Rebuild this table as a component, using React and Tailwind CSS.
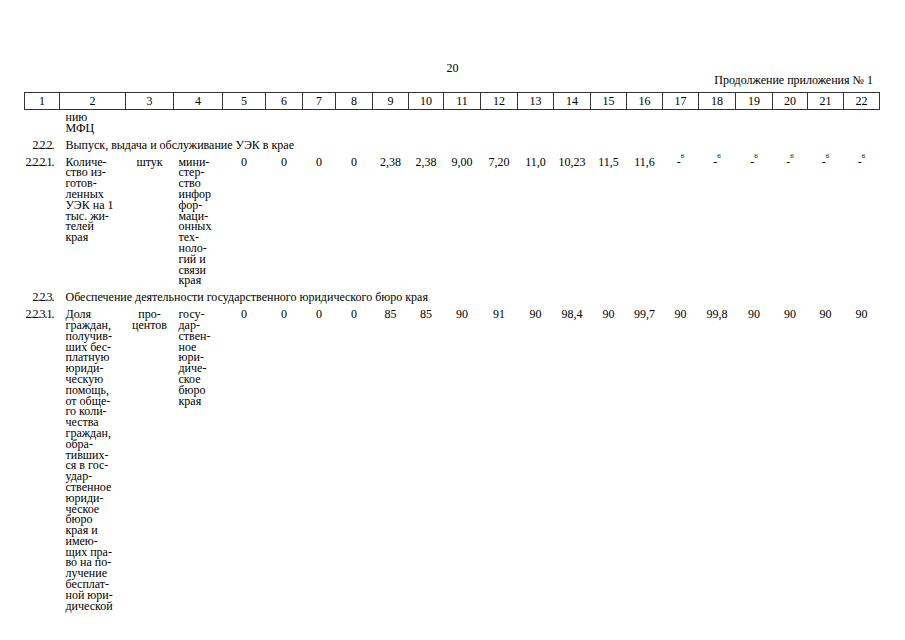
import React from 'react';

const colWidths = [35, 66, 48, 49, 43, 37, 33, 37, 36, 35, 37, 37, 36, 37, 36, 36, 36, 37, 37, 35, 36, 36];

const rows = [
  {
    num: '2.2.2.',
    title: 'Выпуск, выдача и обслуживание УЭК в крае',
    item: {
      num: '2.2.2.1.',
      name: ['Количе-', 'ство из-', 'готов-', 'ленных', 'УЭК на 1', 'тыс. жи-', 'телей', 'края'],
      unit: ['штук'],
      org: ['мини-', 'стер-', 'ство', 'инфор', 'фор-', 'маци-', 'онных', 'тех-', 'ноло-', 'гий и', 'связи', 'края'],
      values: ['0', '0', '0', '0', '2,38', '2,38', '9,00', '7,20', '11,0', '10,23', '11,5', '11,6', 'n', 'n', 'n', 'n', 'n', 'n'],
    },
  },
  {
    num: '2.2.3.',
    title: 'Обеспечение деятельности государственного юридического бюро края',
    item: {
      num: '2.2.3.1.',
      name: [
        'Доля', 'граждан,', 'получив-', 'ших бес-', 'платную', 'юриди-', 'ческую', 'помощь,', 'от обще-', 'го коли-',
        'чества', 'граждан,', 'обра-', 'тивших-', 'ся в гос-', 'удар-', 'ственное', 'юриди-', 'ческое', 'бюро',
        'края и', 'имею-', 'щих пра-', 'во на по-', 'лучение', 'бесплат-', 'ной юри-', 'дической',
      ],
      unit: ['про-', 'центов'],
      org: ['госу-', 'дар-', 'ствен-', 'ное', 'юри-', 'диче-', 'ское', 'бюро', 'края'],
      values: ['0', '0', '0', '0', '85', '85', '90', '91', '90', '98,4', '90', '99,7', '90', '99,8', '90', '90', '90', '90'],
    },
  },
];

const Lines = ({ lines }) => lines.map((l, i) => (
  <div key={i} className="whitespace-nowrap">{l}</div>
));

// "-" with footnote mark 6
const Value = ({ v }) => {
  if (v === 'n') {
    return (
      <span className="inline-flex items-start">
        <span>-</span>
        <span className="relative -top-[4px] text-[7px] leading-[7px]">6</span>
      </span>
    );
  }
  return <span>{v}</span>;
};

export default function App() {
  return (
    <div className="w-[905px] h-[640px] bg-white overflow-hidden text-black font-['Liberation_Serif',serif] text-[12px]">
      <div className="pt-[62px] text-center leading-[12px]">20</div>
      <div className="pr-[32px] text-right leading-[13px]">Продолжение приложения № 1</div>

      <table className="ml-[24px] mt-[5px] w-[855px] table-fixed border-collapse">
        <colgroup>
          {colWidths.map((w, i) => (
            <col key={i} style={{ width: w }} />
          ))}
        </colgroup>
        <thead>
          <tr>
            {colWidths.map((_, i) => (
              <th key={i} className="h-[17px] border border-[#333] p-0 text-center font-normal leading-[14px]">
                {i + 1}
              </th>
            ))}
          </tr>
        </thead>
        <tbody className="align-top">
          <tr>
            <td />
            <td className="pl-[6px] pt-[2px] leading-[10.8px]">
              <Lines lines={['нию', 'МФЦ']} />
            </td>
            <td colSpan={20} />
          </tr>
          {rows.map((r) => (
            <React.Fragment key={r.num}>
              <tr>
                <td className="pr-[6px] pt-[4px] text-right leading-[14px] tracking-[-1px]">{r.num}</td>
                <td colSpan={21} className="pl-[6px] pt-[4px] leading-[14px] whitespace-nowrap">{r.title}</td>
              </tr>
              <tr className="leading-[10.8px]">
                <td className="pr-[6px] pt-[5px] text-right tracking-[-1px] whitespace-nowrap">{r.item.num}</td>
                <td className="pl-[6px] pt-[5px]">
                  <Lines lines={r.item.name} />
                </td>
                <td className="pt-[5px] text-center">
                  <Lines lines={r.item.unit} />
                </td>
                <td className="pl-[5px] pt-[5px]">
                  <Lines lines={r.item.org} />
                </td>
                {r.item.values.map((v, i) => (
                  <td key={i} className="pt-[5px] text-center whitespace-nowrap">
                    <Value v={v} />
                  </td>
                ))}
              </tr>
            </React.Fragment>
          ))}
        </tbody>
      </table>
    </div>
  );
}
